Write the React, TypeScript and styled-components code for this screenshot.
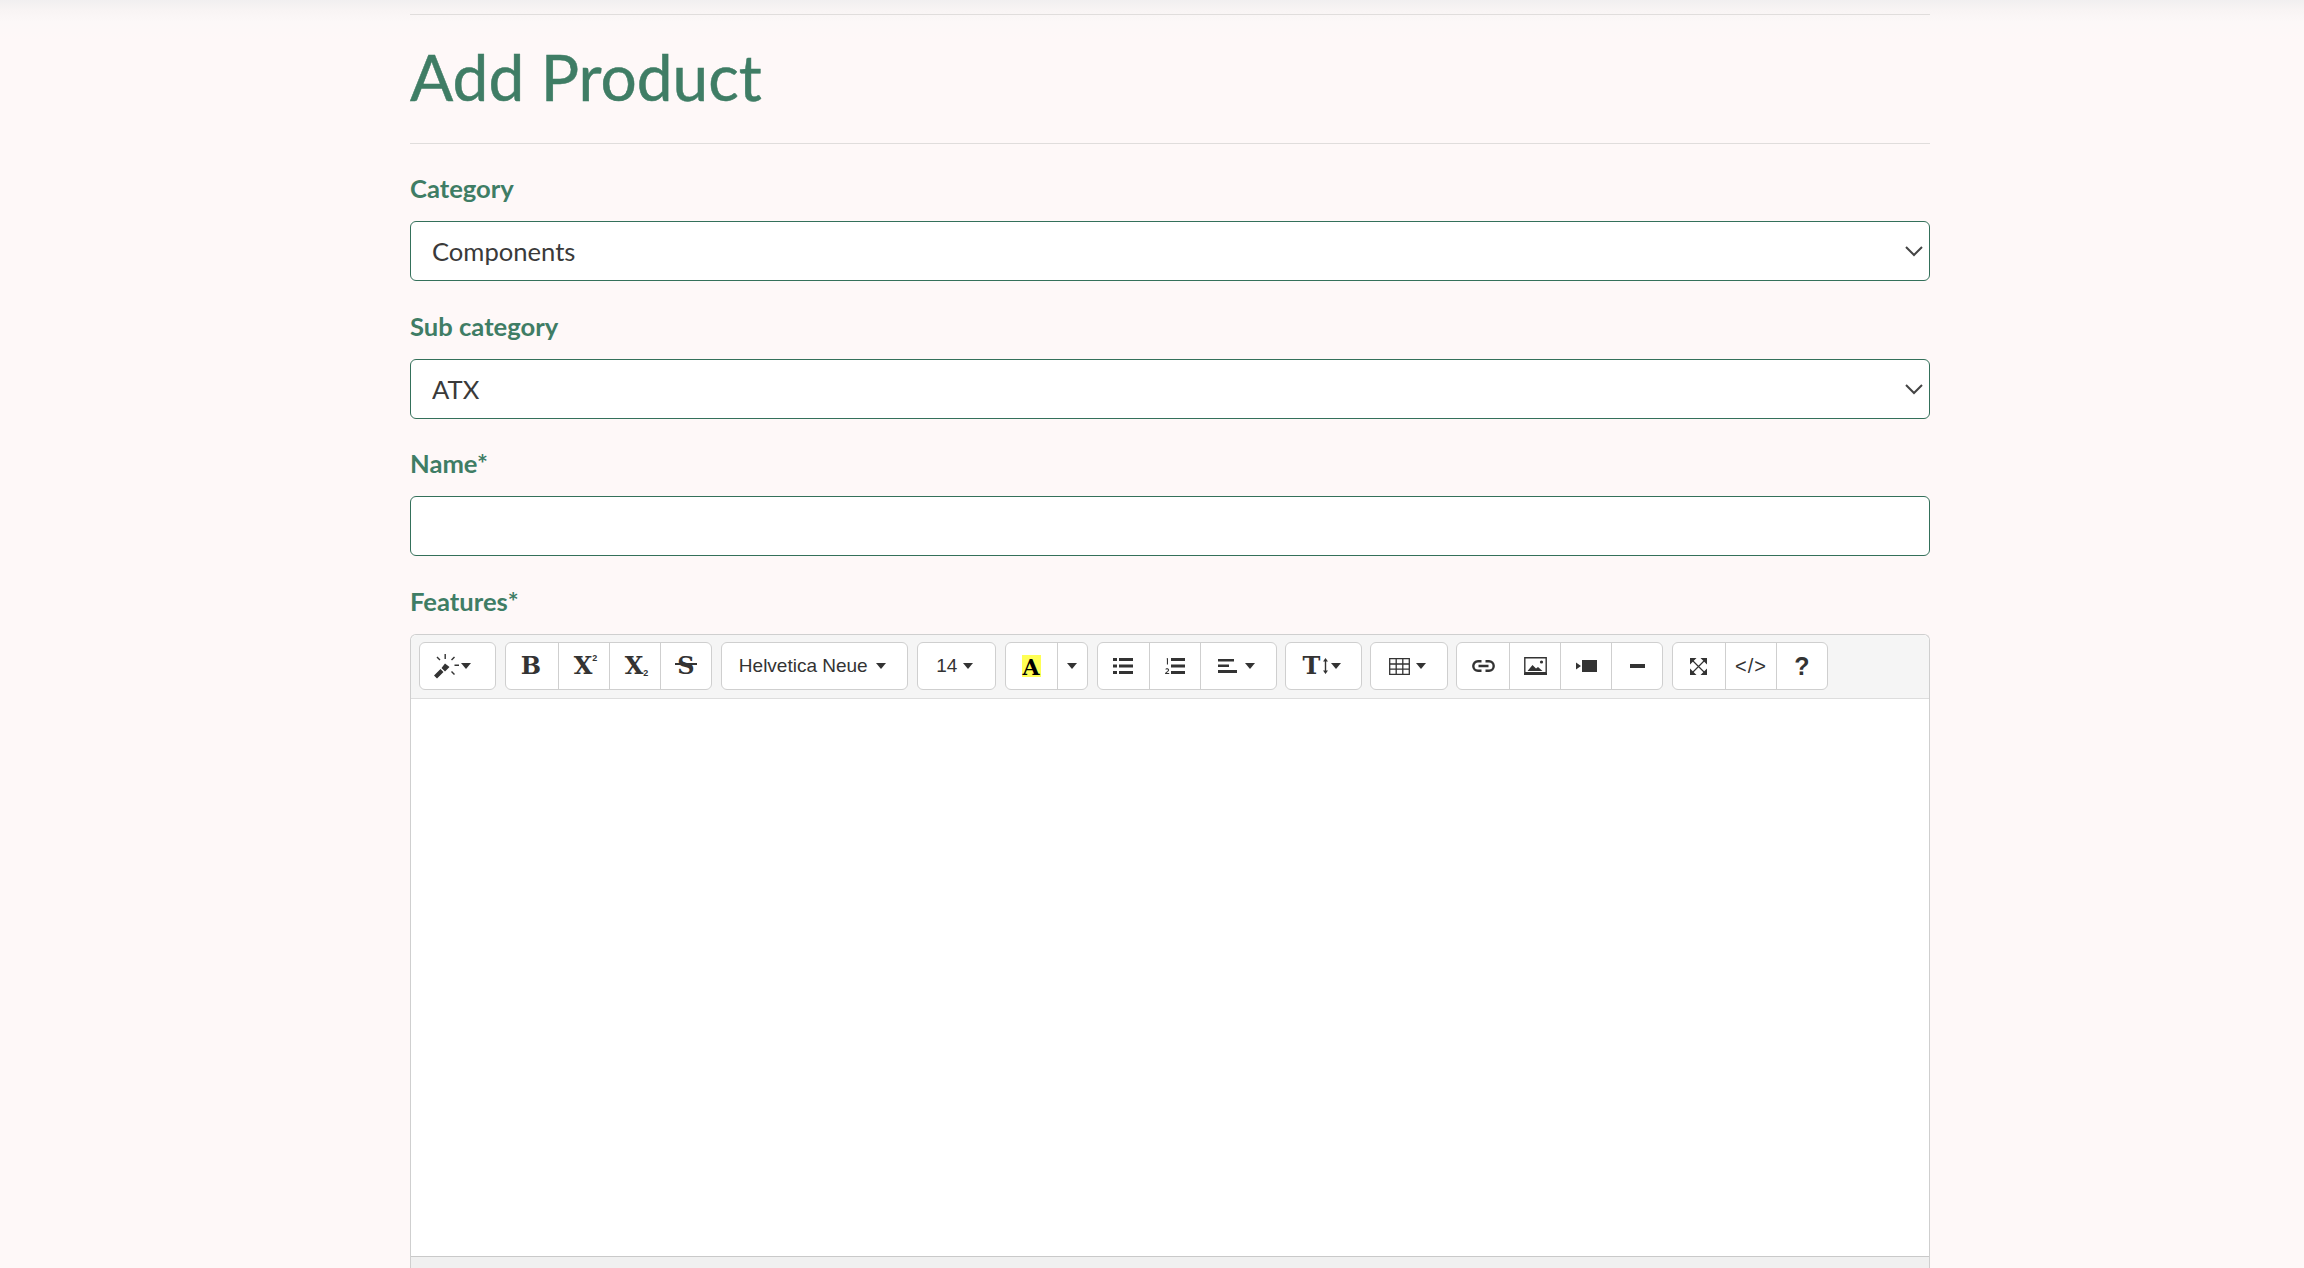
import React from "react";
import { createGlobalStyle, styled } from "styled-components";

const GREEN = "#3f7d65";
const INK = "#333333";

const GlobalStyle = createGlobalStyle`
  html, body {
    margin: 0;
    height: 1268px;
    overflow: hidden;
    background:
      linear-gradient(to bottom, #f1eff0 0, #f8f4f4 10px, #fcf8f8 22px, rgba(254, 248, 248, 0) 40px),
      #fef8f8;
    font-family: Lato, "Liberation Sans", sans-serif;
  }
  * { box-sizing: border-box; }
`;

const Page = styled.main`
  width: 1520px;
  margin-left: 410px;
  padding-top: 14px;
`;
const Rule = styled.hr`
  margin: 0;
  border: 0;
  border-top: 1px solid #e0dddc;
`;
const Title = styled.h1`
  margin: 0;
  height: 128px;
  padding-top: 23px;
  font-size: 64px;
  line-height: 78px;
  font-weight: 400;
  color: ${GREEN};
  -webkit-text-stroke: 0.5px ${GREEN};
`;
const Field = styled.div`
  margin-top: 28px;
  & + & {
    margin-top: 28.6px;
  }
`;
const Label = styled.label`
  display: block;
  height: 33px;
  margin-bottom: 16px;
  font-size: 25.6px;
  line-height: 33px;
  font-weight: 700;
  color: ${GREEN};
`;
const SelectBox = styled.div`
  position: relative;
  height: 60px;
`;
const Select = styled.select`
  appearance: none;
  display: block;
  width: 100%;
  height: 60px;
  padding: 0 48px 0 21px;
  background: #fff;
  border: 1px solid #34705a;
  border-radius: 6px;
  font-family: inherit;
  font-size: 25.6px;
  color: #3a3a3a;
`;
const Chevron = styled.svg`
  position: absolute;
  right: 7px;
  top: 24px;
  width: 18px;
  height: 12px;
  pointer-events: none;
`;
const TextInput = styled.input`
  display: block;
  width: 100%;
  height: 60px;
  padding: 0 21px;
  background: #fff;
  border: 1px solid #34705a;
  border-radius: 6px;
  font-family: inherit;
  font-size: 25.6px;
`;
const Editor = styled.div`
  display: flex;
  flex-direction: column;
  height: 634px;
  border: 1.5px solid #cfcfcf;
  border-bottom: 0;
  border-radius: 6px 6px 0 0;
  background: #fff;
`;
const Toolbar = styled.div`
  display: flex;
  gap: 8.6px;
  height: 64px;
  padding: 7.5px 8px 0;
  background: #f5f5f5;
  border-bottom: 1.5px solid #dddddd;
  border-radius: 6px 6px 0 0;
`;
const Group = styled.div`
  display: flex;
  height: 47.5px;
  background: #fff;
  border: 1px solid #cfcfcf;
  border-radius: 6px;
`;
const ToolButton = styled.button<{ $width?: number; $gap?: number; $shift?: number }>`
  display: flex;
  align-items: center;
  justify-content: center;
  gap: ${({ $gap }) => $gap ?? 6}px;
  width: ${({ $width }) => $width ?? 51}px;
  height: 100%;
  padding: 0 ${({ $shift }) => $shift ?? 0}px 0 0;
  background: transparent;
  border: 0;
  color: ${INK};
  font-family: "Liberation Sans", sans-serif;
  font-size: 19px;
  & + & {
    border-left: 1px solid #cfcfcf;
  }
`;
const Glyph = styled.span`
  position: relative;
  font-family: "DejaVu Serif", serif;
  font-weight: 700;
  font-size: 24px;
  line-height: 1;
  color: ${INK};
`;
const Mini = styled.span<{ $raised?: boolean }>`
  position: absolute;
  left: 100%;
  top: ${({ $raised }) => ($raised ? "0" : "15px")};
  font-family: "Liberation Sans", sans-serif;
  font-size: 9px;
  line-height: 1;
`;
const Strike = styled.i`
  position: absolute;
  left: -2px;
  right: -2px;
  top: 9px;
  height: 2px;
  background: ${INK};
`;
const Marker = styled(Glyph)`
  display: block;
  width: 19px;
  height: 22px;
  background: #ffff55;
  color: #000;
  font-size: 22px;
  line-height: 24px;
  text-align: center;
`;
const CodeLabel = styled.span`
  font-size: 20px;
  letter-spacing: 1px;
`;
const HelpLabel = styled.span`
  font-size: 25px;
  font-weight: 700;
`;
const Caret = styled.i`
  display: block;
  width: 0;
  height: 0;
  border-style: solid;
  border-width: 6px 5px 0;
  border-color: ${INK} transparent transparent;
`;
const EditArea = styled.div`
  height: 558px;
  flex-shrink: 0;
  border-bottom: 1.5px solid #c9c9c9;
`;
const StatusBar = styled.div`
  flex: 1;
  background: #f0f0f0;
`;

const Icon = ({ w, h, children }: { w: number; h: number; children: React.ReactNode }) => (
  <svg width={w} height={h} viewBox={`0 0 ${w} ${h}`} fill={INK}>
    {children}
  </svg>
);

const SelectField = ({ label, value }: { label: string; value: string }) => (
  <Field>
    <Label>{label}</Label>
    <SelectBox>
      <Select defaultValue={value}>
        <option>{value}</option>
      </Select>
      <Chevron viewBox="0 0 18 12">
        <path d="M1 2l8 8 8-8" fill="none" stroke="#444" strokeWidth="2" />
      </Chevron>
    </SelectBox>
  </Field>
);

const App = () => (
  <>
    <GlobalStyle />
    <Page>
      <Rule />
      <Title>Add Product</Title>
      <Rule />
      <SelectField label="Category" value="Components" />
      <SelectField label="Sub category" value="ATX" />
      <Field>
        <Label>Name*</Label>
        <TextInput />
      </Field>
      <Field>
        <Label>Features*</Label>
        <Editor>
          <Toolbar>
            <Group>
              <ToolButton $width={75.4} $gap={1} $shift={12}>
                <Icon w={27} h={25}>
                  <path d="M1 21.500L7.500 15l3 3L4 24.500zM8.500 14l3.500-4.500 4.500 3.500-4.500 4.500z" />
                  <path d="M11.500 0h1.400v5h-1.400zM3.500 3.500l1-1 3 3-1 1zM21 2.500l1 1-3 3-1-1zM21.500 10.500H26v1.400h-4.500zM18 18l1-1 3 3-1 1z" />
                </Icon>
                <Caret />
              </ToolButton>
            </Group>
            <Group>
              <ToolButton $width={52} $shift={2}>
                <Glyph>B</Glyph>
              </ToolButton>
              <ToolButton $shift={2}>
                <Glyph>
                  X<Mini $raised>2</Mini>
                </Glyph>
              </ToolButton>
              <ToolButton $shift={2}>
                <Glyph>
                  X<Mini>2</Mini>
                </Glyph>
              </ToolButton>
              <ToolButton>
                <Glyph>
                  S<Strike />
                </Glyph>
              </ToolButton>
            </Group>
            <Group>
              <ToolButton $width={185.4} $gap={8} $shift={4}>
                Helvetica Neue
                <Caret />
              </ToolButton>
            </Group>
            <Group>
              <ToolButton $width={77.4} $shift={3}>
                14
                <Caret />
              </ToolButton>
            </Group>
            <Group>
              <ToolButton>
                <Marker>A</Marker>
              </ToolButton>
              <ToolButton $width={30.4}>
                <Caret />
              </ToolButton>
            </Group>
            <Group>
              <ToolButton>
                <Icon w={20} h={16}>
                  <path d="M0 0h4v3H0zM0 6.500h4v3H0zM0 13h4v3H0zM6 0h14v3H6zM6 6.500h14v3H6zM6 13h14v3H6z" />
                </Icon>
              </ToolButton>
              <ToolButton>
                <Icon w={20} h={16}>
                  <path d="M6 0h14v3H6zM6 6.500h14v3H6zM6 13h14v3H6z" />
                  <path d="M1.600.500L3 0v6.500H1.900V1.500zM0 16c0-2 3-2.500 3-4 0-1-1.600-.8-2.400-.2v-1c1.200-.8 3.500-.6 3.500 1.200 0 1.600-2 2.200-2.600 3H4.200v1z" />
                </Icon>
              </ToolButton>
              <ToolButton $width={76} $gap={8} $shift={3}>
                <Icon w={19} h={14}>
                  <path d="M0 0h16v2.500H0zM0 5.500h11V8H0zM0 11h19v3H0z" />
                </Icon>
                <Caret />
              </ToolButton>
            </Group>
            <Group>
              <ToolButton $width={74.4} $gap={3} $shift={3}>
                <Glyph>T</Glyph>
                <Icon w={5} h={16}>
                  <path d="M2.500 0L5 3.500H3.200v9H5L2.500 16 0 12.500h1.800v-9H0z" />
                </Icon>
                <Caret />
              </ToolButton>
            </Group>
            <Group>
              <ToolButton $width={75.7} $shift={2}>
                <Icon w={21} h={17}>
                  <path
                    d="M.7.700h19.600v15.600H.7zM.7 6h19.600M.7 11.200h19.600M7.200.7v15.600M13.800.7v15.600"
                    fill="none"
                    stroke={INK}
                    strokeWidth="1.300"
                  />
                </Icon>
                <Caret />
              </ToolButton>
            </Group>
            <Group>
              <ToolButton $width={52}>
                <Icon w={23} h={12}>
                  <path
                    d="M9.500 1.300H6a4.700 4.700 0 0 0 0 9.400h3.500M13.500 1.300H17a4.700 4.700 0 0 1 0 9.400h-3.500M6.500 6h10"
                    fill="none"
                    stroke={INK}
                    strokeWidth="2.400"
                  />
                </Icon>
              </ToolButton>
              <ToolButton>
                <Icon w={23} h={18}>
                  <path d="M.8.800h21.400v15H.8z" fill="none" stroke={INK} strokeWidth="1.400" />
                  <path d="M0 16h23v2H0zM3.500 14l5-6 3.500 3.500 2-1.500 4.500 4z" />
                  <circle cx="17.500" cy="5" r="1.600" />
                </Icon>
              </ToolButton>
              <ToolButton>
                <Icon w={21} h={12}>
                  <path d="M6 0h15v12H6zM0 2.500L5 6l-5 3.500z" />
                </Icon>
              </ToolButton>
              <ToolButton>
                <Icon w={15} h={4}>
                  <path d="M0 0h15v4H0z" />
                </Icon>
              </ToolButton>
            </Group>
            <Group>
              <ToolButton $width={52}>
                <Icon w={17} h={17}>
                  <path d="M2.500 2.500l12 12M14.500 2.500l-12 12" fill="none" stroke={INK} strokeWidth="1.200" />
                  <path d="M0 0h6.500L0 6.500zM17 0v6.500L10.500 0zM0 17v-6.500L6.500 17zM17 17h-6.500l6.500-6.500z" />
                </Icon>
              </ToolButton>
              <ToolButton>
                <CodeLabel>&lt;/&gt;</CodeLabel>
              </ToolButton>
              <ToolButton>
                <HelpLabel>?</HelpLabel>
              </ToolButton>
            </Group>
          </Toolbar>
          <EditArea />
          <StatusBar />
        </Editor>
      </Field>
    </Page>
  </>
);

export default App;
